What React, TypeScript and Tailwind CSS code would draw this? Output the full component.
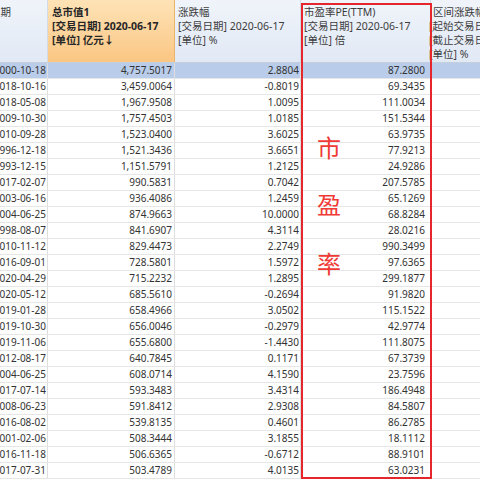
const ROWS: [string, string, string, string][] = [
  ["2000-10-18", "4,757.5017", "2.8804", "87.2800"],
  ["2018-10-16", "3,459.0064", "-0.8019", "69.3435"],
  ["2018-05-08", "1,967.9508", "1.0095", "111.0034"],
  ["2009-10-30", "1,757.4503", "1.0185", "151.5344"],
  ["2010-09-28", "1,523.0400", "3.6025", "63.9735"],
  ["1996-12-18", "1,521.3436", "3.6651", "77.9213"],
  ["1993-12-15", "1,151.5791", "1.2125", "24.9286"],
  ["2017-02-07", "990.5831", "0.7042", "207.5785"],
  ["2003-06-16", "936.4086", "1.2459", "65.1269"],
  ["2004-06-25", "874.9663", "10.0000", "68.8284"],
  ["1998-08-07", "841.6907", "4.3114", "28.0216"],
  ["2010-11-12", "829.4473", "2.2749", "990.3499"],
  ["2016-09-01", "728.5801", "1.5972", "97.6365"],
  ["2020-04-29", "715.2232", "1.2895", "299.1877"],
  ["2020-05-12", "685.5610", "-0.2694", "91.9820"],
  ["2019-01-28", "658.4966", "3.0502", "115.1522"],
  ["2019-10-30", "656.0046", "-0.2979", "42.9774"],
  ["2019-11-06", "655.6800", "-1.4430", "111.8075"],
  ["2012-08-17", "640.7845", "0.1171", "67.3739"],
  ["2004-06-25", "608.0714", "4.1590", "23.7596"],
  ["2017-07-14", "593.3483", "3.4314", "186.4948"],
  ["2008-06-23", "591.8412", "2.9308", "84.5807"],
  ["2016-08-02", "539.8135", "0.4601", "86.2785"],
  ["2001-02-06", "508.3444", "3.1855", "18.1112"],
  ["2016-11-18", "506.6365", "-0.6712", "88.9101"],
  ["2017-07-31", "503.4789", "4.0135", "63.0231"],
];

const FONT = { fontFamily: '"Noto Sans", "Noto Sans CJK SC", sans-serif' };

export default function App() {
  return (
    <div
      className="relative h-[480px] w-[480px] overflow-hidden bg-white text-[10px] text-[#333]"
      style={FONT}
    >
      <div className="-ml-[13px] flex w-[600px] flex-col">
        {/* header */}
        <div className="flex h-[63px] border-b border-[#c5cfdc] text-[10.5px]">
          <HeadCell w="w-[61px]" lines={["日期"]} />
          <div className="w-[127px] shrink-0 border-r border-[#e9b46c] bg-gradient-to-b from-[#fee3b6] to-[#fac683] px-[4px] pt-[5px] font-bold leading-[14px] text-[#262626]">
            <div>总市值1</div>
            <div className="whitespace-nowrap">[交易日期] 2020-06-17</div>
            <div>[单位] 亿元↓</div>
          </div>
          <HeadCell w="w-[126px]" lines={["涨跌幅", "[交易日期] 2020-06-17", "[单位] %"]} />
          <HeadCell w="w-[130px]" lines={["市盈率PE(TTM)", "[交易日期] 2020-06-17", "[单位] 倍"]} />
          <div className="w-[140px] shrink-0 bg-gradient-to-b from-[#f0f4fa] to-[#e1e9f5] pt-[5px] leading-[14px] text-[#3d3d3d]">
            <div className="pl-[2px]">区间涨跌幅</div>
            <div className="-ml-[2px] whitespace-nowrap">[起始交易日] 2020-05-18</div>
            <div className="-ml-[2px] whitespace-nowrap">[截止交易日] 2020-06-17</div>
            <div className="-ml-[2px]">[单位] %</div>
          </div>
        </div>

        {/* body */}
        {ROWS.map((r, i) => (
          <div
            key={i}
            className={`flex h-[16px] border-b border-[#e6e6e6] leading-[15px] ${
              i === 0 ? "bg-[#b9cdea]" : "bg-white"
            }`}
          >
            <div className="w-[61px] shrink-0 border-r border-[#dedede] pr-[1px] text-right">{r[0]}</div>
            <div className="w-[127px] shrink-0 border-r border-[#dedede] pr-[2px] text-right">{r[1]}</div>
            <div className="w-[126px] shrink-0 border-r border-[#dedede] pr-[1px] text-right">{r[2]}</div>
            <div className="w-[130px] shrink-0 border-r border-[#dedede] pr-[5px] text-right">{r[3]}</div>
            <div className="w-[140px] shrink-0" />
          </div>
        ))}
      </div>

      {/* red annotation box */}
      <div className="absolute left-[301px] top-[3px] h-[476px] w-[131px] border-2 border-[#e5262c]">
        <div className="flex flex-col pl-[14px] pt-[131px] text-[24px] leading-[24px] text-[#f03a35]">
          <span>市</span>
          <span className="mt-[33px]">盈</span>
          <span className="mt-[35px]">率</span>
        </div>
      </div>
    </div>
  );
}

function HeadCell({ w, lines }: { w: string; lines: string[] }) {
  return (
    <div
      className={`${w} shrink-0 overflow-hidden border-r border-[#d3dbe6] bg-gradient-to-b from-[#f0f4fa] to-[#e1e9f5] px-[3px] pt-[5px] leading-[14px] text-[#3d3d3d]`}
    >
      {lines.map((l) => (
        <div key={l} className="whitespace-nowrap">
          {l}
        </div>
      ))}
    </div>
  );
}
